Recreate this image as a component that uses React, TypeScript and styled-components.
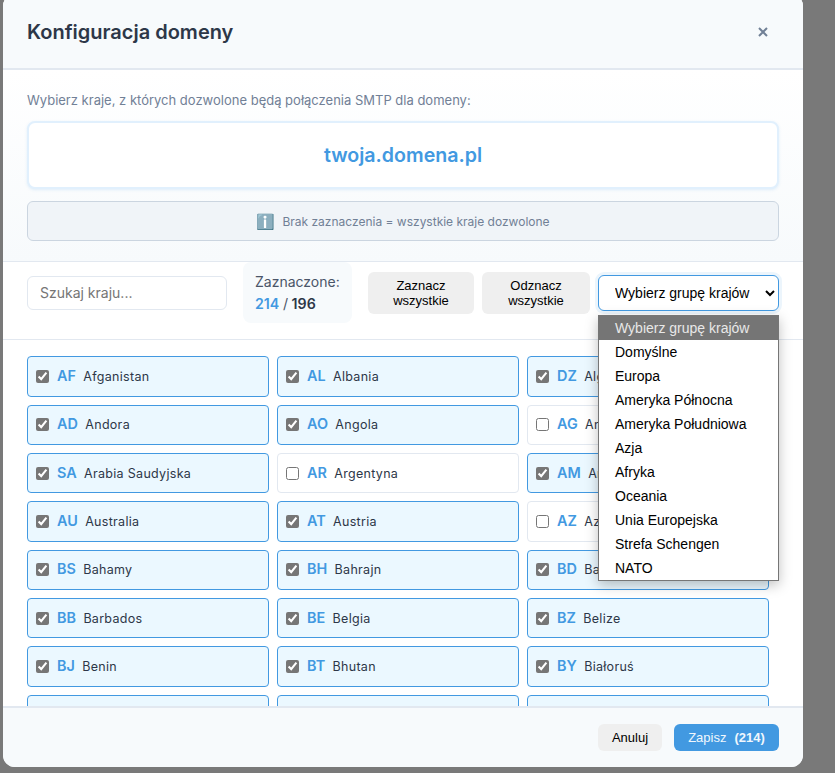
import React from "react";
import styled, {createGlobalStyle} from "styled-components";

const GlobalStyle = createGlobalStyle`
  html, body {
    margin: 0;
    height: 773px;
    overflow: hidden;
    background: #797979;
    font-family: "Inter", "Liberation Sans", sans-serif;
  }
`;

const Modal = styled.div`
  display: flex;
  flex-direction: column;
  width: 800px;
  height: 773px;
  margin: -6px 0 0 3px;
  background: #fff;
  border-radius: 12px;
  overflow: hidden;
`;

const Header = styled.header`
  display: flex;
  flex: none;
  align-items: center;
  justify-content: space-between;
  box-sizing: border-box;
  height: 76px;
  padding: 6px 24px 4px;
  background: #f7fafc;
  border-bottom: 2px solid #e2e8f0;
`;

const Title = styled.h2`
  margin: 0;
  font-size: 20px;
  font-weight: 600;
  color: #2d3748;
`;

const CloseButton = styled.button`
  display: flex;
  padding: 0;
  border: 0;
  background: none;
  color: #718096;
  margin-right: 11px;
`;

const Intro = styled.section`
  flex: none;
  box-sizing: border-box;
  height: 192px;
  padding: 22px 24px 0;
  background: linear-gradient(180deg, #fff 0%, #f7fafc 100%);
  border-bottom: 1px solid #e2e8f0;
`;

const IntroText = styled.p`
  margin: 0 0 13px;
  font-size: 13px;
  line-height: 16px;
  color: #718096;
`;

const DomainBox = styled.div`
  box-sizing: border-box;
  height: 68px;
  display: flex;
  align-items: center;
  justify-content: center;
  background: #fff;
  border: 2px solid #e1f0fd;
  border-radius: 8px;
  box-shadow: 0 1px 3px rgba(66, 153, 225, .15);
  font-size: 19.6px;
  font-weight: 600;
  color: #4299e1;
`;

const Notice = styled.div`
  box-sizing: border-box;
  height: 40px;
  margin-top: 12px;
  display: flex;
  align-items: center;
  justify-content: center;
  gap: 7px;
  background: #f0f4f8;
  border: 1px solid #cbd5e0;
  border-radius: 6px;
  font-size: 12px;
  color: #718096;
`;

const NoticeIcon = styled.span`
  font-size: 15px;
  line-height: 1;
`;

const Toolbar = styled.div`
  flex: none;
  display: flex;
  align-items: center;
  box-sizing: border-box;
  height: 78.4px;
  padding: 0 24px 16px;
  border-bottom: 1px solid #e2e8f0;
`;

const Search = styled.input`
  box-sizing: border-box;
  width: 200px;
  height: 34px;
  padding: 0 12px;
  border: 1px solid #e2e8f0;
  border-radius: 6px;
  font-family: inherit;
  font-size: 14px;
  color: #2d3748;

  &::placeholder {
    color: #757575;
  }
`;

const Stats = styled.div`
  box-sizing: border-box;
  width: 109px;
  height: 61px;
  margin: 0 16px;
  padding: 9px 12px;
  background: #f7fafc;
  border-radius: 8px;
  font-size: 14px;
  line-height: 22px;
  color: #4a5568;
`;

const Count = styled.div`
  font-size: 14.2px;
  font-weight: 600;
  color: #2d3748;
`;

const Selected = styled.span`
  color: #4299e1;
`;

const Slash = styled.span`
  font-weight: 400;
  color: #4a5568;
`;

const ToolButton = styled.button<{$wide?: boolean}>`
  box-sizing: border-box;
  width: ${p => (p.$wide ? "108px" : "106px")};
  height: 42px;
  margin-right: 8px;
  padding: 0 12px;
  border: 0;
  border-radius: 6px;
  background: #efefef;
  font-family: "Liberation Sans", sans-serif;
  font-size: 13px;
  line-height: 15px;
  color: #000;
`;

const GroupPicker = styled.div`
  position: relative;
  width: 181px;
`;

const GroupSelect = styled.select`
  display: block;
  box-sizing: border-box;
  width: 181px;
  height: 36px;
  padding: 0 12px;
  border: 1px solid #4299e1;
  border-radius: 6px;
  background: #fff;
  box-shadow: 0 0 0 3px rgba(66, 153, 225, .1);
  font-family: "Liberation Sans", sans-serif;
  font-size: 14px;
  color: #000;
  outline: none;
`;

const GroupMenu = styled.ul`
  position: absolute;
  z-index: 5;
  top: 40px;
  left: 0;
  box-sizing: border-box;
  width: 181px;
  margin: 0;
  padding: 0;
  list-style: none;
  background: #fff;
  border: 1px solid #767676;
  box-shadow: 0 4px 12px rgba(0, 0, 0, .25);
  font-family: "Liberation Sans", sans-serif;
  font-size: 14px;
`;

const GroupItem = styled.li<{$active?: boolean}>`
  height: 24px;
  padding: 0 16px;
  line-height: 24px;
  white-space: nowrap;
  color: ${p => (p.$active ? "#e8e8e8" : "#000")};
  background: ${p => (p.$active ? "#757575" : "transparent")};
`;

const CountryScroll = styled.div`
  flex: 1;
  min-height: 0;
  overflow-y: scroll;

  &::-webkit-scrollbar {
    width: 10px;
  }

  &::-webkit-scrollbar-track {
    background: #f1f1f1;
    border-radius: 5px;
  }

  &::-webkit-scrollbar-thumb {
    background: #cbd5e0;
    border-radius: 5px;
  }
`;

const CountryGrid = styled.div`
  display: grid;
  grid-template-columns: repeat(3, 242px);
  gap: 8px;
  padding: 16px 24px;
`;

const CountryItem = styled.label<{$checked: boolean}>`
  display: flex;
  align-items: center;
  box-sizing: border-box;
  height: 40.33px;
  padding: 0 8px;
  border: 1px solid ${p => (p.$checked ? "#4299e1" : "#e2e8f0")};
  border-radius: 4px;
  background: ${p => (p.$checked ? "#ebf8ff" : "#fff")};
  overflow: hidden;
`;

const CountryCheck = styled.input`
  flex: none;
  width: 13px;
  height: 13px;
  margin: 0 8px 0 0;
  accent-color: #767676;
`;

const CountryCode = styled.span`
  margin: -2px 7.4px 0 0;
  font-size: 14.4px;
  font-weight: 600;
  color: #4299e1;
`;

const CountryName = styled.span`
  margin-top: -.4px;
  font-size: 12.5px;
  letter-spacing: .3px;
  color: #2d3748;
  white-space: nowrap;
`;

const Footer = styled.footer`
  flex: none;
  display: flex;
  align-items: center;
  justify-content: flex-end;
  gap: 12px;
  box-sizing: border-box;
  height: 61px;
  padding: 0 24px;
  background: #f7fafc;
  border-top: 2px solid #e2e8f0;
`;

const CancelButton = styled.button`
  width: 64px;
  height: 27px;
  padding: 0;
  border: 0;
  border-radius: 6px;
  background: #efefef;
  font-family: "Liberation Sans", sans-serif;
  font-size: 13px;
  color: #000;
`;

const SaveButton = styled.button`
  display: flex;
  align-items: center;
  justify-content: center;
  gap: 8px;
  width: 105px;
  height: 27px;
  padding: 0;
  border: 0;
  border-radius: 6px;
  background: #4299e1;
  font-family: "Liberation Sans", sans-serif;
  font-size: 13px;
  color: #f0f7fd;
`;

const SaveCount = styled.span`
  font-weight: 700;
`;

const GROUPS = [
  "Wybierz grupę krajów", "Domyślne", "Europa", "Ameryka Północna", "Ameryka Południowa", "Azja",
  "Afryka", "Oceania", "Unia Europejska", "Strefa Schengen", "NATO",
];

const UNCHECKED = ["AG", "AR", "AZ"];

const COUNTRIES = ("AF:Afganistan|AL:Albania|DZ:Algieria|AD:Andora|AO:Angola|AG:Antigua i Barbuda|SA:Arabia Saudyjska|AR:Argentyna|AM:Armenia|AU:Australia|AT:Austria|AZ:Azerbejdżan|BS:Bahamy|BH:Bahrajn|BD:Bangladesz|BB:Barbados|BE:Belgia|BZ:Belize|BJ:Benin|BT:Bhutan|BY:Białoruś|BO:Boliwia|BA:Bośnia i Hercegowina|BW:Botswana|BR:Brazylia|BN:Brunei|BG:Bułgaria|BF:Burkina Faso|BI:Burundi|CL:Chile|CN:Chiny|HR:Chorwacja|CY:Cypr|TD:Czad|ME:Czarnogóra|CZ:Czechy|DK:Dania|CD:DR Konga|DM:Dominika|DO:Dominikana|DJ:Dżibuti|EG:Egipt|EC:Ekwador|ER:Erytrea|EE:Estonia|SZ:Eswatini|ET:Etiopia|FJ:Fidżi|PH:Filipiny|FI:Finlandia|FR:Francja|GA:Gabon|GM:Gambia|GH:Ghana|GR:Grecja|GD:Grenada|GE:Gruzja|GY:Gujana|GT:Gwatemala|GN:Gwinea|GW:Gwinea Bissau|GQ:Gwinea Równikowa|HT:Haiti|ES:Hiszpania|NL:Holandia|HN:Honduras|IN:Indie|ID:Indonezja|IQ:Irak|IR:Iran|IE:Irlandia|IS:Islandia|IL:Izrael|JM:Jamajka|JP:Japonia|YE:Jemen|JO:Jordania|KH:Kambodża|CM:Kamerun|CA:Kanada|QA:Katar|KZ:Kazachstan|KE:Kenia|KG:Kirgistan|KI:Kiribati|CO:Kolumbia|KM:Komory|CG:Kongo|KR:Korea Południowa|KP:Korea Północna|XK:Kosowo|CR:Kostaryka|CU:Kuba|KW:Kuwejt|LA:Laos|LS:Lesotho|LB:Liban|LR:Liberia|LY:Libia|LI:Liechtenstein|LT:Litwa|LU:Luksemburg|LV:Łotwa|MK:Macedonia Północna|MG:Madagaskar|MW:Malawi|MV:Malediwy|MY:Malezja|ML:Mali|MT:Malta|MA:Maroko|MR:Mauretania|MU:Mauritius|MX:Meksyk|FM:Mikronezja|MM:Mjanma|MD:Mołdawia|MC:Monako|MN:Mongolia|MZ:Mozambik|NA:Namibia|NR:Nauru|NP:Nepal|DE:Niemcy|NE:Niger|NG:Nigeria|NI:Nikaragua|NO:Norwegia|NZ:Nowa Zelandia|OM:Oman|PK:Pakistan|PW:Palau|PA:Panama|PG:Papua-Nowa Gwinea|PY:Paragwaj|PE:Peru|PL:Polska|PT:Portugalia|ZA:RPA|CF:Republika Środkowoafrykańska|CV:Republika Zielonego Przylądka|RU:Rosja|RO:Rumunia|RW:Rwanda|KN:Saint Kitts i Nevis|LC:Saint Lucia|VC:Saint Vincent i Grenadyny|SV:Salwador|WS:Samoa|SM:San Marino|SN:Senegal|RS:Serbia|SC:Seszele|SL:Sierra Leone|SG:Singapur|SK:Słowacja|SI:Słowenia|SO:Somalia|LK:Sri Lanka|US:Stany Zjednoczone|SD:Sudan|SS:Sudan Południowy|SR:Surinam|SY:Syria|CH:Szwajcaria|SE:Szwecja|TJ:Tadżykistan|TH:Tajlandia|TZ:Tanzania|TL:Timor Wschodni|TG:Togo|TO:Tonga|TT:Trynidad i Tobago|TN:Tunezja|TR:Turcja|TM:Turkmenistan|TV:Tuvalu|UG:Uganda|UA:Ukraina|UY:Urugwaj|UZ:Uzbekistan|VU:Vanuatu|VA:Watykan|VE:Wenezuela|HU:Węgry|GB:Wielka Brytania|VN:Wietnam|IT:Włochy")
  .split("|")
  .map(row => row.split(":"));

function App() {
  return (
    <>
      <GlobalStyle/>
      <Modal>
        <Header>
          <Title>Konfiguracja domeny</Title>
          <CloseButton aria-label="Zamknij">
            <svg width="10" height="10" viewBox="0 0 10 10" fill="none" stroke="currentColor" strokeWidth="2">
              <path d="M1 1l8 8M9 1l-8 8"/>
            </svg>
          </CloseButton>
        </Header>

        <Intro>
          <IntroText>Wybierz kraje, z których dozwolone będą połączenia SMTP dla domeny:</IntroText>
          <DomainBox>twoja.domena.pl</DomainBox>
          <Notice>
            <NoticeIcon>ℹ️</NoticeIcon>
            Brak zaznaczenia = wszystkie kraje dozwolone
          </Notice>
        </Intro>

        <Toolbar>
          <Search placeholder="Szukaj kraju..."/>
          <Stats>
            Zaznaczone:
            <Count><Selected>214</Selected> <Slash>/</Slash> 196</Count>
          </Stats>
          <ToolButton>Zaznacz wszystkie</ToolButton>
          <ToolButton $wide>Odznacz wszystkie</ToolButton>
          <GroupPicker>
            <GroupSelect>
              <option>{GROUPS[0]}</option>
            </GroupSelect>
            <GroupMenu>
              {GROUPS.map((group, i) => (
                <GroupItem key={group} $active={i === 0}>{group}</GroupItem>
              ))}
            </GroupMenu>
          </GroupPicker>
        </Toolbar>

        <CountryScroll>
          <CountryGrid>
            {COUNTRIES.map(([code, name]) => {
              const checked = !UNCHECKED.includes(code);
              return (
                <CountryItem key={code} $checked={checked}>
                  <CountryCheck type="checkbox" defaultChecked={checked}/>
                  <CountryCode>{code}</CountryCode>
                  <CountryName>{name}</CountryName>
                </CountryItem>
              );
            })}
          </CountryGrid>
        </CountryScroll>

        <Footer>
          <CancelButton>Anuluj</CancelButton>
          <SaveButton>Zapisz <SaveCount>(214)</SaveCount></SaveButton>
        </Footer>
      </Modal>
    </>
  );
}

export default App;
